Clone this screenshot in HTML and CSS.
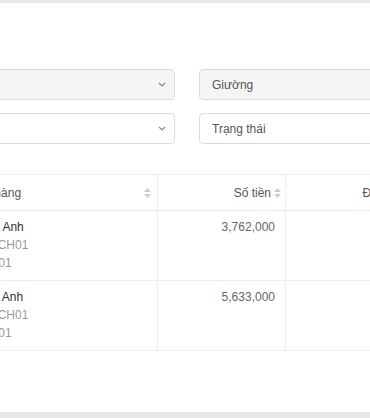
FILE: index.html
```html
<!doctype html>
<html lang="vi">
<head>
	<meta charset="UTF-8">
	<title>Danh sách thanh toán</title>
	<link rel="stylesheet" href="styles.css">
</head>
<body>
	<div class="card">
		<div class="filters">
			<div class="select is-gray">
				<span>Tòa nhà</span>
				<svg class="chevron" width="8" height="5" viewBox="0 0 8 5"><polyline points="1,1 4,4 7,1" fill="none" stroke="#8a8a8a" stroke-width="1.2"/></svg>
			</div>
			<div class="select is-gray">
				<span>Giường</span>
			</div>
			<div class="select">
				<span>Phòng</span>
				<svg class="chevron" width="8" height="5" viewBox="0 0 8 5"><polyline points="1,1 4,4 7,1" fill="none" stroke="#8a8a8a" stroke-width="1.2"/></svg>
			</div>
			<div class="select">
				<span>Trạng thái</span>
			</div>
		</div>

		<table class="list">
			<colgroup>
				<col style="width:233px">
				<col style="width:128px">
				<col style="width:167px">
			</colgroup>
			<thead>
				<tr>
					<th>
						<div class="th-inner">
							<span>Tên khách hàng</span>
							<svg class="sorter" width="7" height="10" viewBox="0 0 7 10"><polygon points="3.5,0 7,4 0,4" fill="#c9ccd2"/><polygon points="0,6 7,6 3.5,10" fill="#c9ccd2"/></svg>
						</div>
					</th>
					<th class="num">
						<div class="th-inner">
							<span>Số tiền</span>
							<svg class="sorter" width="7" height="10" viewBox="0 0 7 10"><polygon points="3.5,0 7,4 0,4" fill="#c9ccd2"/><polygon points="0,6 7,6 3.5,10" fill="#c9ccd2"/></svg>
						</div>
					</th>
					<th class="num">
						<div class="th-inner">
							<span>Đã thanh toán</span>
							<svg class="sorter" width="7" height="10" viewBox="0 0 7 10"><polygon points="3.5,0 7,4 0,4" fill="#c9ccd2"/><polygon points="0,6 7,6 3.5,10" fill="#c9ccd2"/></svg>
						</div>
					</th>
				</tr>
			</thead>
			<tbody>
				<tr>
					<td>
						<div class="name">Nguyễn Lan Anh</div>
						<div class="sub">Mã căn hộ: CH01</div>
						<div class="sub">Số giường: 01</div>
					</td>
					<td class="num">3,762,000</td>
					<td class="num">3,762,000</td>
				</tr>
				<tr>
					<td>
						<div class="name">Nguyễn Mai Anh</div>
						<div class="sub">Mã căn hộ: CH01</div>
						<div class="sub">Số giường: 01</div>
					</td>
					<td class="num">5,633,000</td>
					<td class="num">5,633,000</td>
				</tr>
			</tbody>
		</table>
	</div>
</body>
</html>
```

FILE: styles.css
```css
html, body {
	overflow: hidden;
}
body {
	margin: 0;
	background-color: #e8e8e8;
	font-family: "Liberation Sans", Arial, sans-serif;
	color: #333;
}
.card {
	box-sizing: border-box;
	width: 700px;
	height: 409px;
	margin: 3px 0 0 -99px;
	padding: 66px 24px 0;
	background-color: #fff;
}
.filters {
	display: grid;
	grid-template-columns: 250px 250px;
	gap: 13px 24px;
}
.select {
	box-sizing: border-box;
	height: 31px;
	padding: 0 8px 0 12px;
	display: flex;
	align-items: center;
	justify-content: space-between;
	border: 1px solid #dcdcdc;
	border-radius: 4px;
	background-color: #fff;
	font-size: 12px;
	color: #555;
}
.select.is-gray {
	background-color: #f5f5f5;
}
.list {
	margin-top: 30px;
	table-layout: fixed;
	border-collapse: separate;
	border-spacing: 0;
	border-top: 1px solid #ebedf2;
	font-size: 12px;
}
.list th,
.list td {
	box-sizing: border-box;
	border-right: 1px solid #ebedf2;
	border-bottom: 1px solid #ebedf2;
	text-align: left;
	line-height: 18px;
}
.list th {
	height: 36px;
	padding: 9px 4px 8px 10px;
	font-weight: normal;
	color: #555;
}
.list th:first-child {
	padding-right: 6px;
}
.th-inner {
	display: flex;
	align-items: center;
	justify-content: space-between;
}
.list th.num .th-inner {
	justify-content: flex-end;
	gap: 3px;
}
.sorter {
	flex: none;
}
.list td {
	height: 70px;
	padding: 7px 10px 8px;
	vertical-align: top;
	color: #666;
}
.list td.num {
	text-align: right;
}
.name {
	color: #333;
}
.sub {
	color: #999;
}
```
